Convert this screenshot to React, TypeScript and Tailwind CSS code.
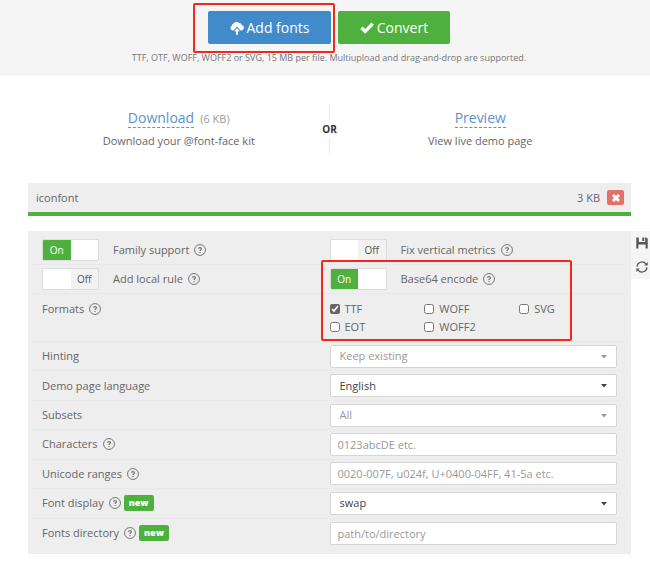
import { useState } from "react";
import type { ReactNode } from "react";

const toggles = [
  { label: "Family support", on: true },
  { label: "Fix vertical metrics", on: false },
  { label: "Add local rule", on: false },
  { label: "Base64 encode", on: true },
];

const formats = ["TTF", "WOFF", "SVG", "EOT", "WOFF2"];

const fields = [
  { id: "hinting", label: "Hinting", type: "select", value: "Keep existing", muted: true },
  { id: "language", label: "Demo page language", type: "select", value: "English" },
  { id: "subsets", label: "Subsets", type: "select", value: "All", muted: true },
  { id: "characters", label: "Characters", type: "text", value: "0123abcDE etc.", help: true },
  { id: "ranges", label: "Unicode ranges", type: "text", value: "0020-007F, u024f, U+0400-04FF, 41-5a etc.", help: true },
  { id: "display", label: "Font display", type: "select", value: "swap", help: true, isNew: true },
  { id: "directory", label: "Fonts directory", type: "text", value: "path/to/directory", help: true, isNew: true },
];

function CloudUploadIcon() {
  return (
    <svg viewBox="0 0 14 14" className="w-3.5 h-3.5" fill="currentColor" aria-hidden="true">
      <path d="M2.600 9.400H3.400L7 5.600l3.600 3.800h0.800A2.600 2.600 0 0 0 12 4.300A3.300 3.300 0 0 0 8.700 1.700A3.600 3.600 0 0 0 3.200 2.800A2.200 2.200 0 0 0 1.800 4.700A2.500 2.500 0 0 0 2.600 9.400z" />
      <path d="M7 7 10 10.300H8v3.500H6v-3.500H4z" />
    </svg>
  );
}

function CheckIcon() {
  return (
    <svg viewBox="0 0 14 14" className="w-3.5 h-3.5" fill="currentColor" aria-hidden="true">
      <path d="M0.200 8 2.600 5.500 5.200 7.900 11.400 1.400 13.900 3.800 5.300 12.700z" />
    </svg>
  );
}

function CrossIcon() {
  return (
    <svg viewBox="0 0 10 10" className="w-2.5 h-2.5" fill="currentColor" aria-hidden="true">
      <path d="M3 1 5 3 7 1 9 3 7 5 9 7 7 9 5 7 3 9 1 7 3 5 1 3z" />
    </svg>
  );
}

function SaveIcon() {
  return (
    <svg viewBox="0 0 12 12" className="w-3 h-3" fill="currentColor" aria-hidden="true">
      <path d="M0.300 0.500h2.500v4.600h6.400V0.500h1.200l1.300 1.200v9.800H9.600V7.400H2.400v4.100H0.300zM6.300 0.500h2v3.600h-2z" />
    </svg>
  );
}

function RefreshIcon() {
  return (
    <svg viewBox="0 0 12 12" className="w-3 h-3" fill="none" stroke="currentColor" strokeWidth="1.200" aria-hidden="true">
      <path d="M1 5.600A5 5 0 0 1 9.900 2.900M11 6.400A5 5 0 0 1 2.100 9.100" />
      <path d="M11.700 1v3.500H8.200zM0.300 11V7.500h3.500z" fill="currentColor" stroke="none" />
    </svg>
  );
}

function HelpIcon() {
  return (
    <svg viewBox="0 0 12 12" className="w-3 h-3 shrink-0 text-[#777]" fill="none" stroke="currentColor" aria-hidden="true">
      <circle cx="6" cy="6" r="5.450" strokeWidth="1" />
      <path d="M4.500 4.800C4.500 3.300 7.500 3.300 7.500 4.800C7.500 5.800 6 5.800 6 7.100M6 7.900v1.200" strokeWidth="1.200" />
    </svg>
  );
}

function Highlight({ className }: { className: string }) {
  return <div className={`absolute border-2 border-[#f0281e] rounded-xs pointer-events-none ${className}`} />;
}

function Toggle({ label, initial }: { label: string; initial: boolean }) {
  const [on, setOn] = useState(initial);
  return (
    <div className="flex items-center gap-3.5">
      <button
        type="button"
        role="switch"
        aria-checked={on}
        aria-label={label}
        onClick={() => setOn(!on)}
        className="grid grid-cols-2 w-[57px] h-[22px] border border-[#dcdcdc] rounded-xs overflow-hidden text-[10px] leading-5 bg-white"
      >
        {on ? (
          <span className="bg-[#4fb13d] text-white">On</span>
        ) : (
          <span className="col-start-2 bg-[#f2f2f2] text-[#555]">Off</span>
        )}
      </button>
      <span className="flex items-center gap-[5px] font-medium">
        {label}
        <HelpIcon />
      </span>
    </div>
  );
}

function Row({ children }: { children: ReactNode }) {
  return <div className="grid grid-cols-2 items-center px-2.5 border-b border-[#e9e9e9] last:border-0">{children}</div>;
}

export default function App() {
  return (
    <div className="font-['Open_Sans',sans-serif] text-[11px] leading-4 text-[#666] bg-white">
      <header className="bg-[#f5f5f5] border-b border-[#eee] pt-[11px] pb-2 text-center">
        <div className="flex justify-center gap-[7px] pl-2 text-sm text-white">
          <div className="relative">
            <button type="button" className="flex items-center justify-center gap-[3px] w-[123px] h-[33px] bg-[#428bca] rounded-xs">
              <CloudUploadIcon />
              Add fonts
            </button>
            <Highlight className="-left-[15px] -right-1 -top-2 -bottom-[9px]" />
          </div>
          <button type="button" className="flex items-center justify-center gap-[3px] w-[112px] h-[33px] bg-[#4fb13d] rounded-xs">
            <CheckIcon />
            Convert
          </button>
        </div>
        <p className="mt-1.5 pl-2 text-[9px] text-[#777]">
          TTF, OTF, WOFF, WOFF2 or SVG, 15 MB per file. Multiupload and drag-and-drop are supported.
        </p>
      </header>

      <main className="pl-7 pt-[30px] pb-6">
        <div className="mr-[19px] flex items-center text-center">
          <div className="flex-1">
            <a href="#download" className="inline-block text-sm leading-[18px] text-[#5b93cf] border-b border-dashed border-[#5b93cf]">Download</a>
            <span className="ml-1.5 text-[#999]">(6 KB)</span>
            <p className="mt-[5px]">Download your @font-face kit</p>
          </div>
          <div className="w-0 flex flex-col items-center text-[10px] font-bold text-[#333]">
            <span className="w-px h-3.5 bg-[#e5e5e5]" />
            <span className="my-0.5">OR</span>
            <span className="w-px h-3.5 bg-[#e5e5e5]" />
          </div>
          <div className="flex-1">
            <a href="#preview" className="inline-block text-sm leading-[18px] text-[#5b93cf] border-b border-dashed border-[#5b93cf]">Preview</a>
            <p className="mt-[5px]">View live demo page</p>
          </div>
        </div>

        <div className="mr-[19px] mt-[30px] flex items-center h-[33px] pl-2 pr-[7px] bg-[#eee] border-b-4 border-[#4fb13d]">
          <span className="flex-1 font-medium">iconfont</span>
          <span>3 KB</span>
          <button type="button" aria-label="Remove iconfont" className="ml-[7px] grid place-items-center w-[17px] h-[15px] bg-[#e2706a] text-white rounded-xs">
            <CrossIcon />
          </button>
        </div>

        <div className="mt-[15px] flex items-start">
          <form className="relative flex-1 px-1 pt-[5px] pb-1.5 bg-[#eee]">
            <div className="grid auto-rows-fr min-h-[58px]">
              {[0, 2].map((start) => (
                <div key={start} className="grid grid-cols-2 items-center px-2.5 border-b border-[#e9e9e9]">
                  {toggles.slice(start, start + 2).map((t) => (
                    <Toggle key={t.label} label={t.label} initial={t.on} />
                  ))}
                </div>
              ))}
            </div>

            <div className="grid grid-cols-2 px-2.5 pt-1.5 pb-[5px] border-b border-[#e9e9e9]">
              <span className="flex items-center gap-[5px] h-[18px] font-medium">
                Formats
                <HelpIcon />
              </span>
              <div className="grid grid-cols-3 pr-[3px]">
                {formats.map((name) => (
                  <label key={name} className="flex items-center gap-[5px] h-[18px]">
                    <input type="checkbox" defaultChecked={name === "TTF"} className="w-2.5 h-2.5 accent-[#666]" />
                    {name}
                  </label>
                ))}
              </div>
            </div>

            <div className="grid auto-rows-fr min-h-[206px]">
              {fields.map((f) => (
                <Row key={f.id}>
                  <div className="flex items-center">
                    <label htmlFor={f.id} className="font-medium">{f.label}</label>
                    {f.help && <span className="ml-[5px]"><HelpIcon /></span>}
                    {f.isNew && (
                      <span className="ml-[3px] px-[5px] bg-[#4fb13d] text-white text-[9px] font-extrabold rounded-xs">new</span>
                    )}
                  </div>
                  {f.type === "select" ? (
                    <div className={`relative ${f.muted ? "text-[#999]" : "text-[#444]"}`}>
                      <select id={f.id} className="block w-full h-[23px] pl-[9px] pr-6 appearance-none bg-white border border-[#d5d5d5] rounded-xs">
                        <option>{f.value}</option>
                      </select>
                      <svg viewBox="0 0 6 4" className="absolute right-2.5 top-2.5 w-1.5 h-1 pointer-events-none" fill="currentColor" aria-hidden="true">
                        <path d="M0 0h6L3 3.500z" />
                      </svg>
                    </div>
                  ) : (
                    <input
                      id={f.id}
                      type="text"
                      placeholder={f.value}
                      className="block w-full h-[23px] px-[7px] bg-white border border-[#d5d5d5] rounded-xs placeholder:text-[#999]"
                    />
                  )}
                </Row>
              ))}
            </div>
            <Highlight className="left-[293px] top-[29px] w-[251px] h-[81px]" />
          </form>

          <aside className="w-[19px] h-12 pl-[3px] flex flex-col items-center justify-around bg-[#f5f5f5] text-[#555]">
            <button type="button" aria-label="Save settings"><SaveIcon /></button>
            <button type="button" aria-label="Reset settings"><RefreshIcon /></button>
          </aside>
        </div>
      </main>
    </div>
  );
}
